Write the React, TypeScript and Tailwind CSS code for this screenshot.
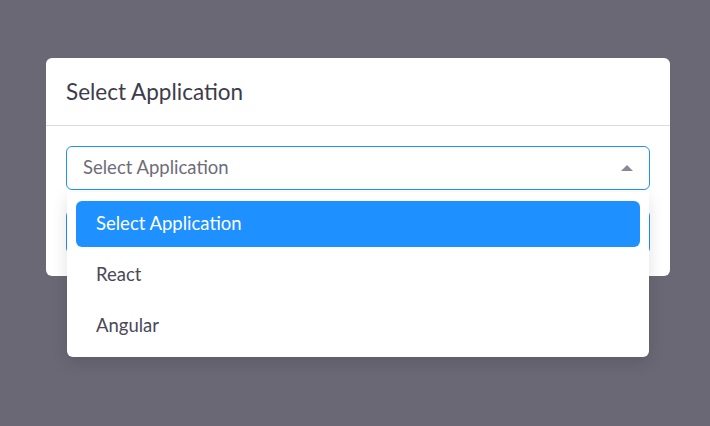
import React from 'react';

const options = ['Select Application', 'React', 'Angular'];

export default function App() {
  return (
    <div
      className="w-[710px] h-[426px] bg-[#6b6876] pt-[58px] pl-[46px]"
      style={{ fontFamily: "Lato, 'Noto Sans', sans-serif" }}
    >
      <div className="relative w-[624px] bg-white rounded-[6px]">
        {/* header */}
        <div className="h-[68px] flex items-center px-5 border-b border-[#dcdce0]">
          <h2 className="text-[22.5px] text-[#3e3c4b]">Select Application</h2>
        </div>

        {/* body */}
        <div className="px-5 pt-5 pb-[22px] flex flex-col gap-5">
          <div className="h-[44px] flex items-center justify-between pl-4 pr-4 border border-[#1e90ff] rounded-[6px]">
            <span className="text-[18.5px] text-[#6e6c79]">Select Application</span>
            <svg width="12" height="6" viewBox="0 0 12 6">
              <path d="M0 6 L6 0 L12 6 Z" fill="#8a8994" />
            </svg>
          </div>
          <button className="h-[44px] rounded-[6px] bg-[#1e90ff] text-white text-[18.5px]">
            Continue
          </button>
        </div>

        {/* open dropdown menu */}
        <div className="absolute left-[21px] top-[134px] w-[582px] bg-white rounded-b-[6px] shadow-[0_6px_16px_rgba(0,0,0,0.12)] pt-[9px] pb-2 px-[9px] flex flex-col gap-[5px]">
          {options.map((opt, i) => (
            <div
              key={opt}
              className={
                i === 0
                  ? 'h-[46px] flex items-center px-5 rounded-[6px] bg-[#1e90ff] text-white text-[18.5px]'
                  : 'h-[46px] flex items-center px-5 rounded-[6px] text-[#4a4858] text-[18.5px]'
              }
            >
              {opt}
            </div>
          ))}
        </div>
      </div>
    </div>
  );
}
